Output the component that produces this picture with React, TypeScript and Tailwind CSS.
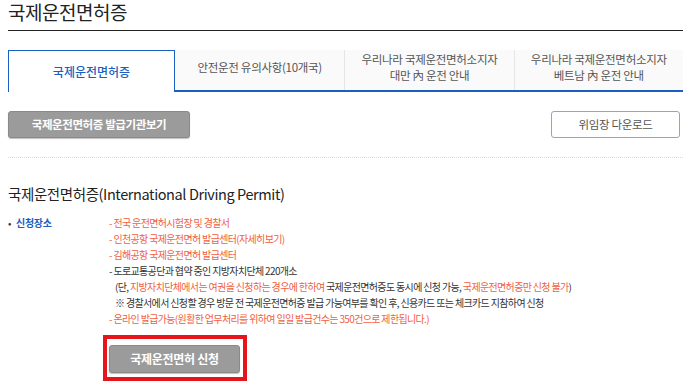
import React from "react";

const blue = "text-[#1a5fc1]";

const Red = ({ children }: { children: React.ReactNode }) => (
  <span className="text-[#f0603f]">{children}</span>
);

export default function App() {
  const tabs = [
    { label: ["안전운전 유의사항(10개국)"] },
    { label: ["우리나라 국제운전면허소지자", "대만 內 운전 안내"] },
    { label: ["우리나라 국제운전면허소지자", "베트남 內 운전 안내"] },
  ];

  return (
    <div
      className="w-[683px] h-[384px] overflow-hidden bg-white pl-2 pt-px text-[#333]"
      style={{ fontFamily: '"Noto Sans CJK KR", "Noto Sans", sans-serif' }}
    >
      {/* page title */}
      <h1 className="text-[19px] leading-[21px] tracking-[-0.5px] text-[#222]">국제운전면허증</h1>
      <div className="mt-[8px] h-px bg-[#222]" />

      {/* tabs */}
      <div className="mt-[19px] flex h-[42px]">
        <div className={`w-[167px] flex items-center justify-center border-t border-l border-r border-[#1a5fc1] bg-white text-[12px] font-medium ${blue}`}>
          국제운전면허증
        </div>
        {tabs.map((t, i) => (
          <div
            key={i}
            className="flex-1 border-b-2 border-[#1a5fc1] bg-[#fafafa] text-[11.5px] leading-[16px] text-[#555] tracking-[-0.3px]"
          >
            <div className={`w-full h-full flex flex-col items-center justify-center pb-[6px] ${i > 0 ? "border-l border-[#e6e6e6]" : ""}`}>
              {t.label.map((l) => (
                <span key={l}>{l}</span>
              ))}
            </div>
          </div>
        ))}
      </div>

      {/* buttons */}
      <div className="mt-[19px] flex items-center pr-[3px]">
        <button className="h-[27px] w-[182px] rounded-[3px] border border-[#8a8a8a] bg-[#9b9b9b] text-[11.5px] font-bold text-white tracking-[-0.4px] shadow-[0_1px_1px_rgba(0,0,0,0.25)]">
          국제운전면허증 발급기관보기
        </button>
        <button className="ml-auto h-[27px] w-[129px] rounded-[3px] border border-[#8aa6d4] bg-white text-[11.5px] text-[#555] tracking-[-0.3px]">
          위임장 다운로드
        </button>
      </div>

      <div className="mt-[19px] border-t border-dotted border-[#d8d8d8]" />

      {/* section */}
      <h2 className="mt-[24px] text-[14.5px] leading-[24px] tracking-[-0.4px] text-[#222]">
        국제운전면허증(International Driving Permit)
      </h2>

      <div className="mt-[9px] flex text-[10px] leading-[16px] tracking-[-0.65px]">
        <div className="w-[101px] flex items-start">
          <span className="w-[8px] text-[#333]">•</span>
          <span className={`font-bold tracking-[-0.3px] ${blue}`}>신청장소</span>
        </div>
        <div className="flex flex-col">
          <Red>- 전국 운전면허시험장 및 경찰서</Red>
          <Red>- 인천공항 국제운전면허 발급센터(자세히보기)</Red>
          <Red>- 김해공항 국제운전면허 발급센터</Red>
          <span>- 도로교통공단과 협약 중인 지방자치단체 220개소</span>
          <span className="pl-[6px]">
            (단, <Red>지방자치단체에서는 여권을 신청하는 경우에 한하여</Red> 국제운전면허증도 동시에 신청 가능,{" "}
            <Red>국제운전면허증만 신청 불가</Red>)
          </span>
          <span className="pl-[6px]">
            ※ 경찰서에서 신청할 경우 방문 전 국제운전면허증 발급 가능여부를 확인 후, 신용카드 또는 체크카드 지참하여 신청
          </span>
          <Red>- 온라인 발급가능(원활한 업무처리를 위하여 일일 발급건수는 350건으로 제한됩니다.)</Red>
        </div>
      </div>

      <div className="mt-[8px] ml-[95px] w-[144px] border-4 border-[#e8141b] pt-[6px] pb-[4px] pl-[2px] pr-[3px]">
        <button className="h-[28px] w-[131px] rounded-[3px] border border-[#8a8a8a] bg-[#9b9b9b] text-[12px] font-bold text-white tracking-[-0.3px] shadow-[0_1px_1px_rgba(0,0,0,0.25)]">
          국제운전면허 신청
        </button>
      </div>
    </div>
  );
}
